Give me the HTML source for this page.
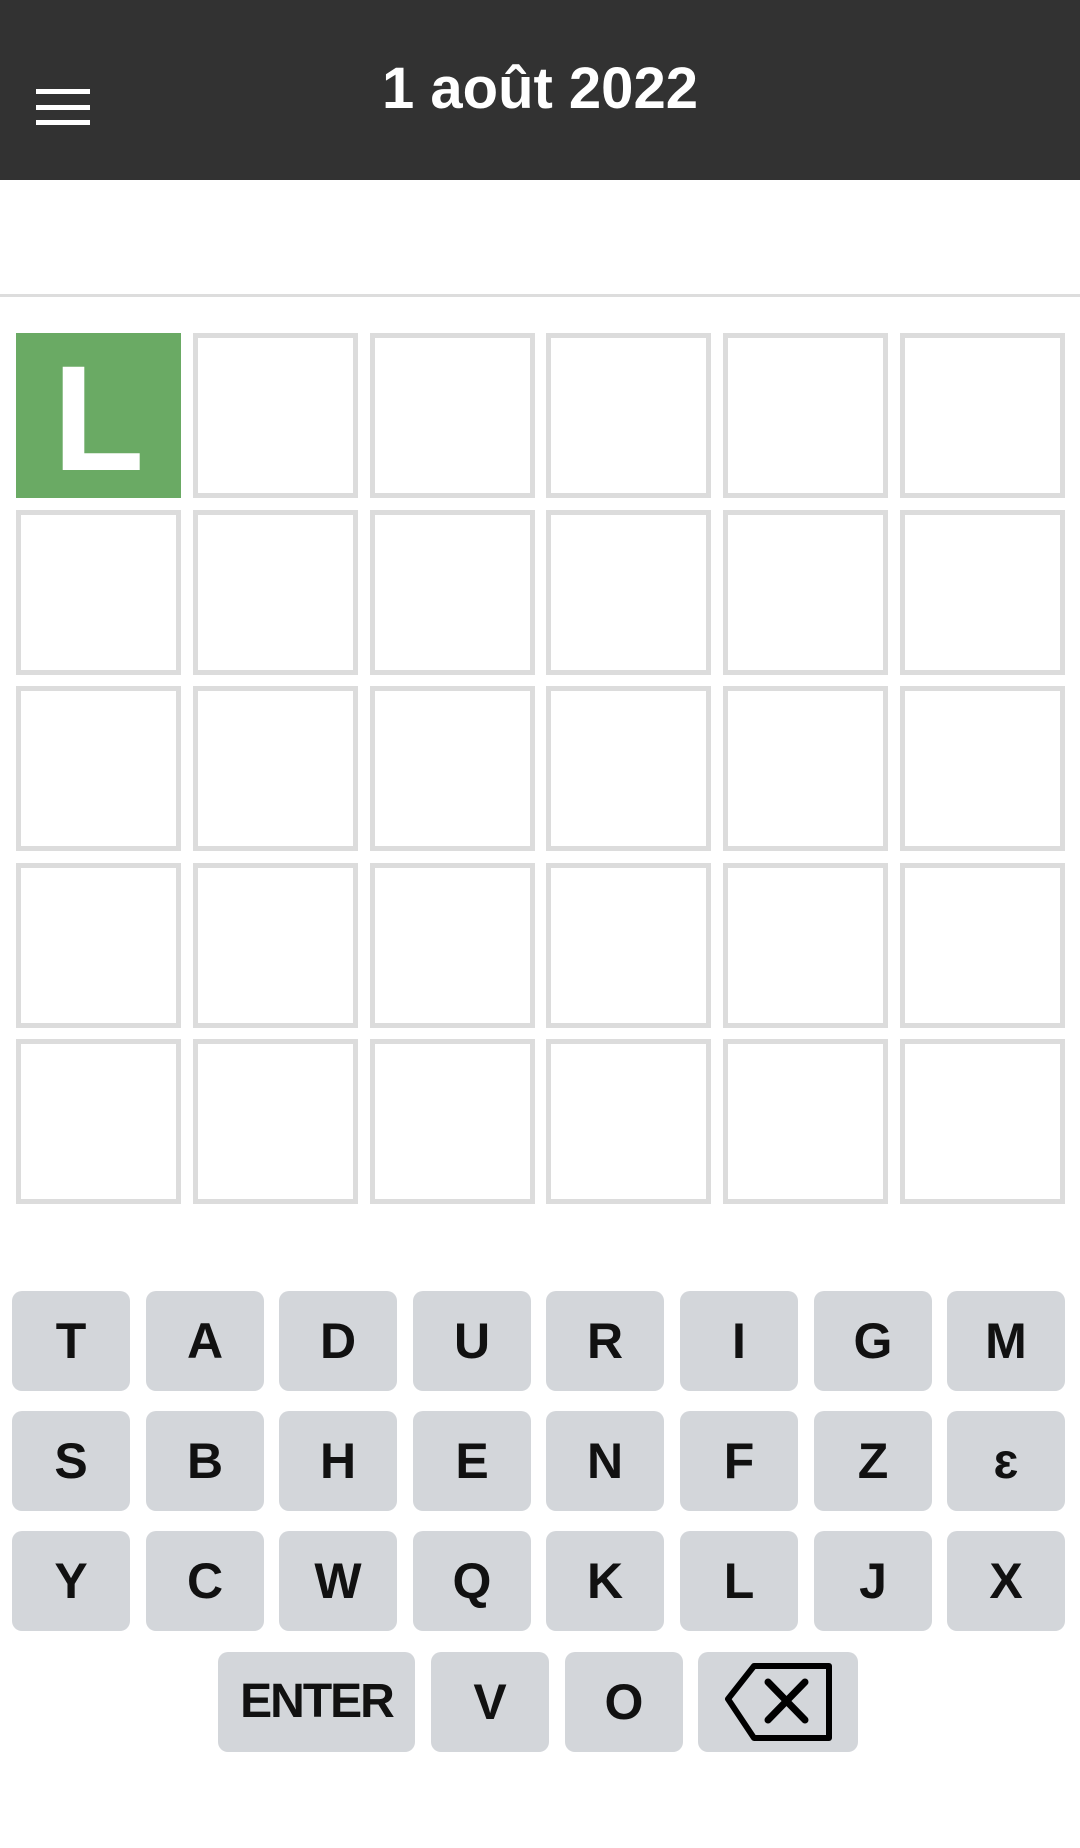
<!DOCTYPE html>
<html><head><meta charset="utf-8"><style>
*{margin:0;padding:0;box-sizing:border-box}
body{width:1080px;height:1848px;background:#fff;position:relative;overflow:hidden;font-family:"Liberation Sans",Arial,sans-serif}
.hdr{position:absolute;left:0;top:0;width:1080px;height:180px;background:#323232}
.bar{position:absolute;left:36px;width:54px;height:5px;background:#fff}
.title{position:absolute;left:0;width:1080px;top:54px;text-align:center;color:#fff;font-size:58px;font-weight:bold;line-height:70px}
.line{position:absolute;left:0;top:294px;width:1080px;height:3px;background:#ddd}
.tile{position:absolute;width:165px;height:165px;border:5px solid #dcdcdc}
.g{background:#6aaa64;border:none;color:#fff;font-weight:bold;font-size:150px;text-align:center;line-height:170px}
.key{position:absolute;height:100px;background:#d3d6da;border-radius:10px;text-align:center;line-height:100px;font-weight:bold;font-size:50px;color:#111}
</style></head><body>
<div class="hdr">
<div class="bar" style="top:89px"></div><div class="bar" style="top:105px"></div><div class="bar" style="top:120px"></div>
<div class="title">1 août 2022</div>
</div>
<div class="line"></div>
<div id="grid"></div>
<div class="tile g" style="left:16px;top:333px">L</div>
<script></script>
<!-- grid tiles -->
<div class="tile" style="left:193px;top:333px"></div><div class="tile" style="left:370px;top:333px"></div><div class="tile" style="left:546px;top:333px"></div><div class="tile" style="left:723px;top:333px"></div><div class="tile" style="left:900px;top:333px"></div>
<div class="tile" style="left:16px;top:510px"></div><div class="tile" style="left:193px;top:510px"></div><div class="tile" style="left:370px;top:510px"></div><div class="tile" style="left:546px;top:510px"></div><div class="tile" style="left:723px;top:510px"></div><div class="tile" style="left:900px;top:510px"></div>
<div class="tile" style="left:16px;top:686px"></div><div class="tile" style="left:193px;top:686px"></div><div class="tile" style="left:370px;top:686px"></div><div class="tile" style="left:546px;top:686px"></div><div class="tile" style="left:723px;top:686px"></div><div class="tile" style="left:900px;top:686px"></div>
<div class="tile" style="left:16px;top:863px"></div><div class="tile" style="left:193px;top:863px"></div><div class="tile" style="left:370px;top:863px"></div><div class="tile" style="left:546px;top:863px"></div><div class="tile" style="left:723px;top:863px"></div><div class="tile" style="left:900px;top:863px"></div>
<div class="tile" style="left:16px;top:1039px"></div><div class="tile" style="left:193px;top:1039px"></div><div class="tile" style="left:370px;top:1039px"></div><div class="tile" style="left:546px;top:1039px"></div><div class="tile" style="left:723px;top:1039px"></div><div class="tile" style="left:900px;top:1039px"></div>
<!-- keyboard -->
<div class="key" style="left:12px;top:1291px;width:118px">T</div><div class="key" style="left:146px;top:1291px;width:118px">A</div><div class="key" style="left:279px;top:1291px;width:118px">D</div><div class="key" style="left:413px;top:1291px;width:118px">U</div><div class="key" style="left:546px;top:1291px;width:118px">R</div><div class="key" style="left:680px;top:1291px;width:118px">I</div><div class="key" style="left:814px;top:1291px;width:118px">G</div><div class="key" style="left:947px;top:1291px;width:118px">M</div>
<div class="key" style="left:12px;top:1411px;width:118px">S</div><div class="key" style="left:146px;top:1411px;width:118px">B</div><div class="key" style="left:279px;top:1411px;width:118px">H</div><div class="key" style="left:413px;top:1411px;width:118px">E</div><div class="key" style="left:546px;top:1411px;width:118px">N</div><div class="key" style="left:680px;top:1411px;width:118px">F</div><div class="key" style="left:814px;top:1411px;width:118px">Z</div><div class="key" style="left:947px;top:1411px;width:118px">ɛ</div>
<div class="key" style="left:12px;top:1531px;width:118px">Y</div><div class="key" style="left:146px;top:1531px;width:118px">C</div><div class="key" style="left:279px;top:1531px;width:118px">W</div><div class="key" style="left:413px;top:1531px;width:118px">Q</div><div class="key" style="left:546px;top:1531px;width:118px">K</div><div class="key" style="left:680px;top:1531px;width:118px">L</div><div class="key" style="left:814px;top:1531px;width:118px">J</div><div class="key" style="left:947px;top:1531px;width:118px">X</div>
<div class="key" style="left:218px;top:1652px;width:197px;font-size:48px;letter-spacing:-2px">ENTER</div>
<div class="key" style="left:431px;top:1652px;width:118px">V</div>
<div class="key" style="left:565px;top:1652px;width:118px">O</div>
<div class="key" style="left:698px;top:1652px;width:160px">
<svg width="160" height="100" viewBox="0 0 160 100" style="position:absolute;left:0;top:0">
<path d="M30 47 L56 14 L131 14 L131 86 L56 86 Z" fill="none" stroke="#000" stroke-width="6" stroke-linejoin="round"/>
<path d="M70 30 L107 68 M107 30 L70 68" stroke="#000" stroke-width="7" stroke-linecap="round"/>
</svg></div>
</body></html>
